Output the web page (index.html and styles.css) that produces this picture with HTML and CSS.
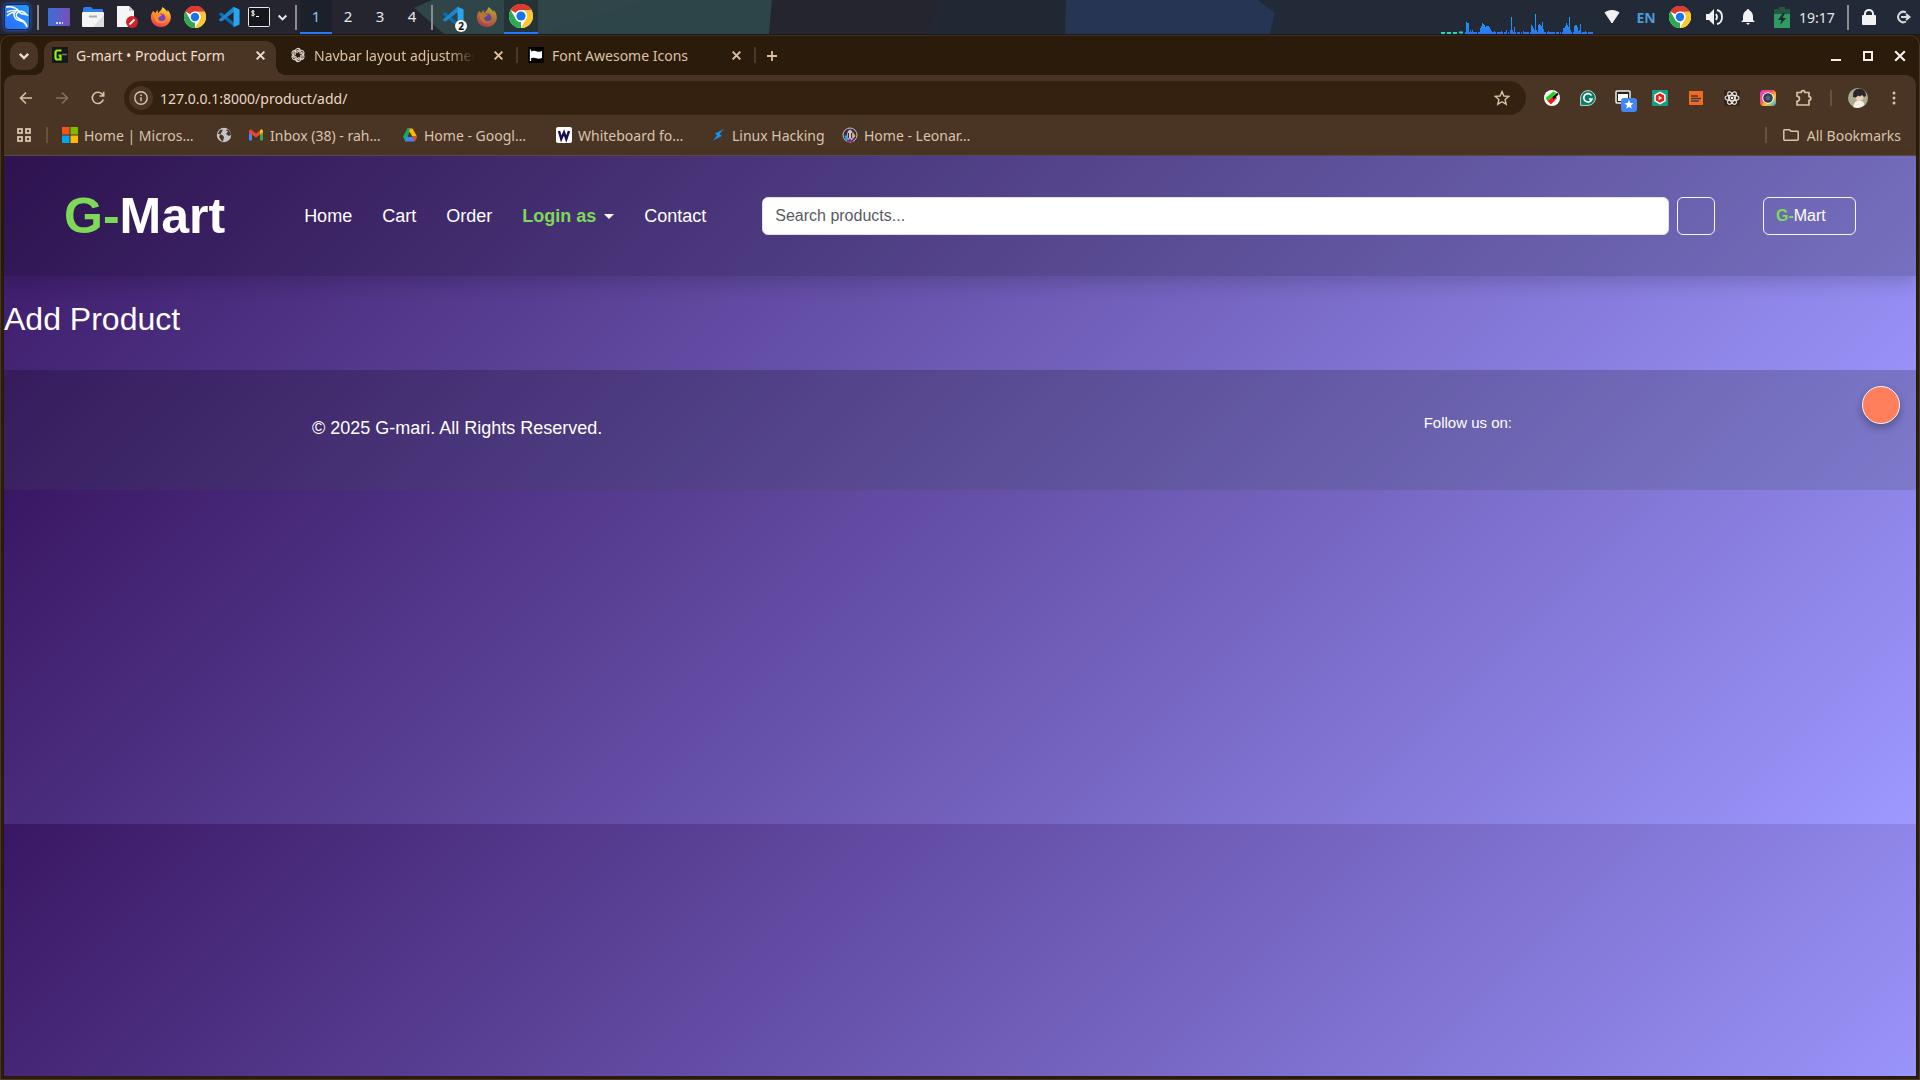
FILE: index.html
```html
<!DOCTYPE html>
<html lang="en">
<head>
<meta charset="utf-8">
<meta name="viewport" content="width=device-width, initial-scale=1">
<title>G-mart • Product Form</title>
<link rel="stylesheet" href="styles.css">
</head>
<body>
<svg class="defs" aria-hidden="true">
  <defs>
    <linearGradient id="g-kali" x1="0" y1="1" x2="1" y2="0"><stop offset="0" stop-color="#2a6cff"/><stop offset="1" stop-color="#1f9bff"/></linearGradient>
    <linearGradient id="g-desk" x1="0" y1="0" x2="1" y2="0"><stop offset="0" stop-color="#3a6fd8"/><stop offset="1" stop-color="#7a4fb5"/></linearGradient>
    <linearGradient id="g-fox" x1="0.7" y1="0" x2="0.3" y2="1"><stop offset="0" stop-color="#ffdf3d"/><stop offset="0.45" stop-color="#ff8a26"/><stop offset="1" stop-color="#f5335a"/></linearGradient>
    <linearGradient id="g-cam" x1="0" y1="0" x2="1" y2="1"><stop offset="0" stop-color="#e23bf0"/><stop offset="0.4" stop-color="#ff4f5e"/><stop offset="0.65" stop-color="#ffc428"/><stop offset="1" stop-color="#22a6ff"/></linearGradient>
    <linearGradient id="g-load" x1="0" y1="0" x2="0" y2="1"><stop offset="0" stop-color="#16b0f5"/><stop offset="1" stop-color="#2e74ee"/></linearGradient>
    <symbol id="chrome" viewBox="0 0 24 24">
      <circle cx="12" cy="12" r="12" fill="#fff"/>
      <path d="M1.6 6A12 12 0 0 1 22.4 6H12a6 6 0 0 0-5.2 3z" fill="#e33b2e"/>
      <path d="M1.6 6 6.8 15a6 6 0 0 0 5.2 3l0 6A12 12 0 0 1 1.6 6z" fill="#2da94f"/>
      <path d="M22.4 6A12 12 0 0 1 12 24l5.2-9A6 6 0 0 0 16.5 8 6 6 0 0 0 12 6z" fill="#fdc72e"/>
      <path d="M1.6 6A12 12 0 0 1 22.4 6H12z" fill="#dc3a2e"/>
      <circle cx="12" cy="12" r="6" fill="#fff"/><circle cx="12" cy="12" r="4.6" fill="#1a73e8"/>
    </symbol>
    <symbol id="firefox" viewBox="0 0 24 24">
      <path d="M3.5 5.5 6 7.5 8 4l1 3.5C11 5 13 4 13.5 1c3 1.500 4 4 5.500 5.500V4C23 8 24 13 21 18c-4 6.500-14 6.500-18 .5-3-4.500-2.500-9.500.5-13z" fill="url(#g-fox)"/>
      <circle cx="12" cy="13" r="4.800" fill="#7a43c9"/>
      <path d="M3 9c2-1.500 5-2 7-.5l3 1c-.5 1.800-2.500 2-3.500 2.500C8 14 10 17 13 16.500c2 0 3.500-1 4.500-3C18 19 10 21 6 16 4.500 14 4 11 3 9z" fill="#ff8f27"/>
    </symbol>
    <symbol id="vscode" viewBox="0 0 24 24">
      <path d="M2.300 7.300 4.300 7.300 18 18.500V23.300L.8 9z" fill="#0e6cae"/>
      <path d="M.8 15 17 .8 18 6 4.300 16.700 2.300 16.700z" fill="#1b86cf"/>
      <path d="M17 .8 23.500 3.800V20.200L17 23.200z" fill="#2ba4ef"/>
    </symbol>
    <symbol id="close" viewBox="0 0 10 10"><path d="M1.500 1.500 8.500 8.500M8.500 1.500 1.500 8.500" stroke="currentColor" stroke-width="1.800" fill="none"/></symbol>
    <symbol id="chevron" viewBox="0 0 10 10"><path d="M1.500 3.200 5 6.700 8.500 3.200" stroke="currentColor" stroke-width="1.900" fill="none"/></symbol>
  </defs>
</svg>

<header class="panel">
  <svg class="panel-art" viewBox="0 0 1920 35" preserveAspectRatio="none" aria-hidden="true">
    <rect width="1920" height="35" fill="#24252f"/>
    <path d="M414 8 432 0H772L769 35H444z" fill="#304547"/>
    <path d="M540 35H769L772 0H650z" fill="#2d4449"/>
    <path d="M772 0H938L927 35H769z" fill="#25252e"/>
    <path d="M938 0H1066L1065 35H927z" fill="#212834"/>
    <path d="M1066 0H1258L1275 13 1270 35H1065z" fill="#273554"/>
    <path d="M1258 0H1920V35H1270L1275 13z" fill="#222a37"/>
  </svg>
  <nav class="panel-group" aria-label="Applications">
    <button class="p-btn p-start" aria-label="Menu"><svg width="26" height="26" viewBox="0 0 26 26"><rect x="1" y="1" width="24" height="24" rx="3" fill="url(#g-kali)"/><path d="M2 3C8 2 12 4 15 7M3 8c4-2 8-2 12-1 4 0 6 1 8 4l-4-1c-2 0-3-1-4-2-3 1-4 4-1 6 4 2 8 3 9 9-2-5-5-6-9-7-5-2-5-7-2-9M3 12c3-3 6-4 9-4" stroke="#fff" stroke-width="1.400" fill="none"/></svg></button>
    <span class="p-sep"></span>
    <button class="p-btn" aria-label="Show desktop"><svg width="22" height="18" viewBox="0 0 22 18"><rect width="22" height="18" rx="1" fill="url(#g-desk)"/><path d="M8 15h2M11 15h2M14 15h1" stroke="#fff" stroke-width="1.500"/></svg></button>
    <button class="p-btn" aria-label="Files"><svg width="22" height="20" viewBox="0 0 22 20"><path d="M1 2q0-2 2-2h6l2 2h9q1 0 1 1v4H1z" fill="#2f7bf0"/><rect y="5" width="22" height="15" rx="1" fill="#f4f4f4"/><path d="M22 8v12H11z" fill="#dcdcdc"/><path d="M7 9.500h8" stroke="#aaa" stroke-width="2"/></svg></button>
    <button class="p-btn" aria-label="Text editor"><svg width="22" height="22" viewBox="0 0 22 22"><path d="M1 0h12l5 5v16H1z" fill="#f6f6f6"/><path d="M13 0 18 5H13z" fill="#ccc"/><circle cx="16" cy="16" r="6" fill="#d3222a"/><path d="M13.500 18.500 18.500 13.500" stroke="#fff" stroke-width="1.800"/></svg></button>
    <button class="p-btn" aria-label="Firefox"><svg width="22" height="22"><use href="#firefox"/></svg></button>
    <button class="p-btn" aria-label="Chrome"><svg width="22" height="22"><use href="#chrome"/></svg></button>
    <button class="p-btn" aria-label="Code"><svg width="22" height="22"><use href="#vscode"/></svg></button>
    <button class="p-btn p-narrow" aria-label="Terminal"><svg width="22" height="20" viewBox="0 0 22 20"><rect x=".5" y=".5" width="21" height="19" rx="1" fill="#16171b" stroke="#e8e8e8"/><path d="M6.500 4.500C5 3.500 3.500 4 3.500 5s3 1 3 2.300-2 1.500-3.200.6M5 3v6.500M8 9.500h3" stroke="#fff" fill="none"/></svg></button>
    <button class="p-btn p-chevron" aria-label="More terminals"><svg width="11" height="11"><use href="#chevron"/></svg></button>
    <span class="p-sep"></span>
    <button class="ws ws-on">1</button><button class="ws">2</button><button class="ws">3</button><button class="ws">4</button>
    <span class="p-sep"></span>
    <button class="p-btn" aria-label="Code, 2 windows"><svg width="22" height="22"><use href="#vscode"/></svg><span class="p-count">2</span></button>
    <button class="p-btn p-dim" aria-label="Firefox window"><svg width="22" height="22"><use href="#firefox"/></svg></button>
    <button class="p-btn p-on" aria-label="Chrome window"><svg width="24" height="24"><use href="#chrome"/></svg></button>
  </nav>
  <div class="panel-group">
    <svg class="load" width="152" height="34" viewBox="0 0 152 34" role="img" aria-label="CPU load"><path d="M0 33h4M6 33h4M12 33h4M18 32.500h4" stroke="#1fd8c4" stroke-width="2"/><path d="M24 33H152" stroke="#2e74ee" stroke-width="2" stroke-dasharray="3 1 1 1 6 1"/><path d="M25 34V22H26V23H28V32H29V30H30V34H31V30H32V34H39V28H40V26H41V23H42V24H43V25H44V27H45V26H48V27H49V29H50V31H51V34H53V31H54V34H60V31H61V34H65V30H66V34H69V30H70V17H71V30H72V32H73V27H74V32H75V34H82V31H83V34H90V25H91V26H92V28H93V30H94V14H95V30H96V32H97V25H98V24H99V25H100V26H101V22H102V29H103V34H107V31H108V34H122V28H124V26H125V23H126V25H127V27H128V17H129V30H130V34H133V26H134V25H136V27H137V31H138V30H139V24H140V33H141V34H144V31H145V34z" fill="url(#g-load)"/></svg>
    <button class="p-btn" aria-label="Wi-Fi"><svg width="16" height="14" viewBox="0 0 16 14"><path d="M1 2.500Q8-1.500 15 2.500L8 13z" fill="#f2f2f2" stroke="#f2f2f2" stroke-linejoin="round"/></svg></button>
    <button class="p-btn p-lang">EN</button>
    <button class="p-btn" aria-label="Chrome"><svg width="22" height="22"><use href="#chrome"/></svg></button>
    <button class="p-btn" aria-label="Volume"><svg width="18" height="18" viewBox="0 0 18 18"><path d="M1 6h3l5-5v16l-5-5H1z" fill="#f2f2f2"/><path d="M11 6q2 3 0 6M12 2q5 1 5 7t-5 7" stroke="#f2f2f2" stroke-width="1.800" fill="none"/></svg></button>
    <button class="p-btn" aria-label="Notifications"><svg width="16" height="16" viewBox="0 0 16 16"><path d="M8 0q1.500 0 1.500 1.500Q13 3 13 8v3l2 2H1l2-2V8q0-5 3.500-6.500Q6.500 0 8 0zM6 14h4l-2 2z" fill="#f2f2f2"/></svg></button>
    <button class="p-btn" aria-label="Battery"><svg width="16" height="21" viewBox="0 0 16 21"><path d="M5 0h6v2h4q1 0 1 1v17q0 1-1 1H1q-1 0-1-1V3q0-1 1-1h4z" fill="#23573f"/><path d="M0 7h16v13q0 1-1 1H1q-1 0-1-1z" fill="#2f9a62"/><path d="M9 6 4 13h3.500L6 18l6-7H8.500L11 6z" fill="#1b2a33"/></svg></button>
    <time class="p-clock">19:17</time>
    <span class="p-sep"></span>
    <button class="p-btn" aria-label="Lock"><svg width="14" height="16" viewBox="0 0 14 16"><rect y="6" width="14" height="10" rx="1" fill="#f2f2f2"/><path d="M3 7V4.500a4 3.500 0 0 1 8 0V7" stroke="#f2f2f2" stroke-width="2" fill="none"/></svg></button>
    <button class="p-btn" aria-label="Log out"><svg width="16" height="14" viewBox="0 0 16 14"><path d="M11 2.500A5.200 5.200 0 1 0 11 11.500M6 7h8M11 4l3.500 3L11 10" stroke="#d8dade" stroke-width="2" fill="none"/></svg></button>
  </div>
</header>

<div class="window">
  <div class="tabstrip">
    <button class="tab-menu" aria-label="Search tabs"><svg width="12" height="12"><use href="#chevron"/></svg></button>
    <div class="tabs">
      <div class="tab tab-active">
        <svg width="16" height="16" viewBox="0 0 16 16"><rect width="16" height="16" fill="#17181a"/><path d="M9.500 3.500H5.500Q3.500 3.500 3.500 6v4.500q0 2 2 2h3V8.500H6.500" stroke="#8ff01c" stroke-width="2.200" fill="none"/><path d="M10 7.500h5" stroke="#777" stroke-width="1.500"/></svg>
        <span class="tab-title">G-mart • Product Form</span>
        <button class="icon-btn tab-close" aria-label="Close tab"><svg width="11" height="11"><use href="#close"/></svg></button>
      </div>
      <div class="tab">
        <svg width="16" height="16" viewBox="0 0 16 16" fill="none" stroke="#e2d8cf" stroke-width="1.100"><g id="knot"><path d="M5.200 8.200V4.200a2.800 2.800 0 0 1 5.200-1.400M5.200 4.800 8.400 3a2.800 2.800 0 0 1 2 0"/></g><use href="#knot" transform="rotate(60 8 8)"/><use href="#knot" transform="rotate(120 8 8)"/><use href="#knot" transform="rotate(180 8 8)"/><use href="#knot" transform="rotate(240 8 8)"/><use href="#knot" transform="rotate(300 8 8)"/></svg>
        <span class="tab-title tab-fade">Navbar layout adjustmen</span>
        <button class="icon-btn tab-close" aria-label="Close tab"><svg width="11" height="11"><use href="#close"/></svg></button>
      </div>
      <div class="tab">
        <svg width="16" height="16" viewBox="0 0 16 16"><rect width="16" height="16" rx="1" fill="#000"/><path d="M2.500 2.500V14" stroke="#fff" stroke-width="1.300"/><path d="M3 4.500q3-1.500 5.500-.3T14 4v7q-3 1.200-5.500.2T3 11z" fill="#fff"/></svg>
        <span class="tab-title">Font Awesome Icons</span>
        <button class="icon-btn tab-close" aria-label="Close tab"><svg width="11" height="11"><use href="#close"/></svg></button>
      </div>
    </div>
    <button class="icon-btn tab-new" aria-label="New tab"><svg width="12" height="12" viewBox="0 0 12 12"><path d="M6 1v10M1 6h10" stroke="currentColor" stroke-width="1.800"/></svg></button>
    <div class="win-controls">
      <button class="icon-btn" aria-label="Minimize"><svg width="12" height="12" viewBox="0 0 12 12"><path d="M1 10h10" stroke="currentColor" stroke-width="2"/></svg></button>
      <button class="icon-btn" aria-label="Maximize"><svg width="12" height="12" viewBox="0 0 12 12"><rect x="2" y="2" width="8" height="8" fill="none" stroke="currentColor" stroke-width="2"/></svg></button>
      <button class="icon-btn" aria-label="Close"><svg width="12" height="12" viewBox="0 0 10 10"><path d="M1 1 9 9M9 1 1 9" stroke="currentColor" stroke-width="1.800"/></svg></button>
    </div>
  </div>

  <div class="toolbar">
    <button class="icon-btn" aria-label="Back"><svg width="14" height="14" viewBox="0 0 14 14"><path d="M13 7H2M7 1.500 1.500 7 7 12.500" stroke="currentColor" stroke-width="1.600" fill="none"/></svg></button>
    <button class="icon-btn is-off" aria-label="Forward"><svg width="14" height="14" viewBox="0 0 14 14"><path d="M1 7h11M7 1.500 12.500 7 7 12.500" stroke="currentColor" stroke-width="1.600" fill="none"/></svg></button>
    <button class="icon-btn" aria-label="Reload"><svg width="14" height="14" viewBox="0 0 14 14"><path d="M12.300 8.500A5.600 5.600 0 1 1 11 3L12.500 4.700M12.700.8V5H8.500" stroke="currentColor" stroke-width="1.600" fill="none"/></svg></button>
    <div class="omnibox">
      <button class="site-info" aria-label="View site information"><svg width="14" height="14" viewBox="0 0 14 14"><circle cx="7" cy="7" r="6.200" fill="none" stroke="currentColor" stroke-width="1.400"/><path d="M7 6.200v4M7 3.500v1.400" stroke="currentColor" stroke-width="1.500"/></svg></button>
      <input class="url" type="text" aria-label="Address" value="127.0.0.1:8000/product/add/">
      <button class="icon-btn" aria-label="Bookmark this tab"><svg width="16" height="16" viewBox="0 0 16 16"><path d="M8 1.600 9.900 6 14.700 6.400 11.100 9.600 12.200 14.200 8 11.700 3.800 14.200 4.900 9.600 1.300 6.400 6.100 6z" fill="none" stroke="currentColor" stroke-width="1.400"/></svg></button>
    </div>
    <div class="extensions">
      <button class="icon-btn" aria-label="Colour picker"><svg width="16" height="16" viewBox="0 0 16 16"><circle cx="8" cy="8" r="8" fill="#fff"/><path d="M1.500 8l8-6.500 3 1.500-9 8z" fill="#12d812"/><path d="M3.500 11l7-6 2.500 3-6 6.500z" fill="#f01c1c"/><path d="M8.500 7l5-4.500 1 2-5 5z" fill="#111"/></svg></button>
      <button class="icon-btn" aria-label="Grammarly"><svg width="16" height="16" viewBox="0 0 16 16"><path d="M.6 15.400V8A7.400 7.400 0 1 1 8 15.400z" fill="#117a65" stroke="#b9d5cd"/><path d="M11.500 5.500A4.200 4.200 0 1 0 12 9H9" fill="none" stroke="#fff" stroke-width="1.600"/></svg></button>
      <button class="icon-btn ext-badge" aria-label="Tab saver"><svg width="22" height="22" viewBox="0 0 22 22"><rect x="1" y="1" width="14" height="12" rx="1" fill="#222" stroke="#eee" stroke-width="1.500"/><rect x="3" y="4" width="10" height="7" fill="#fff"/><rect x="6" y="8" width="16" height="14" rx="3" fill="#4285f4"/><path d="M14 10 15.300 13 18.500 13.300 16 15.400 16.800 18.600 14 16.900 11.200 18.600 12 15.400 9.500 13.300 12.700 13z" fill="#fff"/></svg></button>
      <button class="icon-btn" aria-label="Video helper"><svg width="16" height="16" viewBox="0 0 16 16"><rect width="16" height="16" rx="1" fill="#12a17f"/><path d="M8 1.500 13.700 4.800V11.200L8 14.500 2.300 11.200V4.800z" fill="#fff"/><path d="M8 3.300 12.200 5.600V10.400L8 12.700 3.800 10.400V5.600z" fill="#f01919"/><path d="M6.700 5.800 10.300 8 6.700 10.200z" fill="#fff"/></svg></button>
      <button class="icon-btn" aria-label="Notes"><svg width="14" height="14" viewBox="0 0 14 14"><rect width="14" height="14" fill="#f26b1d"/><path d="M2 5h7M2 7.500h10M2 10h8" stroke="#3b3b4a" stroke-width="1.300"/></svg></button>
      <button class="icon-btn" aria-label="React tools"><svg width="16" height="16" viewBox="0 0 16 16"><rect width="16" height="16" fill="#35271b"/><g fill="none" stroke="#f0ebe6" stroke-width="1.100"><ellipse cx="8" cy="8" rx="7" ry="2.700"/><ellipse cx="8" cy="8" rx="7" ry="2.700" transform="rotate(60 8 8)"/><ellipse cx="8" cy="8" rx="7" ry="2.700" transform="rotate(120 8 8)"/></g><circle cx="8" cy="8" r="1.300" fill="#fff"/></svg></button>
      <button class="icon-btn" aria-label="Screen capture"><svg width="16" height="16" viewBox="0 0 16 16"><rect width="16" height="16" rx="4" fill="url(#g-cam)"/><circle cx="8" cy="8" r="5.800" fill="#fff"/><circle cx="8" cy="8" r="4.800" fill="#2d3b4d"/><circle cx="8" cy="8" r="2.500" fill="#4d6074"/></svg></button>
      <button class="icon-btn" aria-label="Extensions"><svg width="18" height="18" viewBox="0 0 18 18"><path d="M2 3.500H6.200a1.800 1.800 0 0 1 3.600 0H14V7.700a1.800 1.800 0 0 1 0 3.600V16H2V12.300q2.500-.3 2.500-2.500T2 7.200z" fill="none" stroke="currentColor" stroke-width="1.700" stroke-linejoin="round"/></svg></button>
    </div>
    <span class="bar-sep"></span>
    <button class="icon-btn" aria-label="Profile"><svg width="20" height="20" viewBox="0 0 20 20"><circle cx="10" cy="10" r="10" fill="#a9ac8d"/><path d="M5 19q1-6 6-7 5 1 5.500 5Q13 20 10 20 7 20 5 19z" fill="#f3efe8"/><ellipse cx="11.500" cy="9" rx="4" ry="3.500" fill="#efcdb6"/><path d="M5 9Q4 1 11.500 .500 18 1 18 8l-2 1-2-2-2 1.500-2-1-2 2z" fill="#29252a"/></svg></button>
    <button class="icon-btn" aria-label="Menu"><svg width="4" height="14" viewBox="0 0 4 14" fill="currentColor"><circle cx="2" cy="2" r="1.500"/><circle cx="2" cy="7" r="1.500"/><circle cx="2" cy="12" r="1.500"/></svg></button>
  </div>

  <nav class="bookmarks" aria-label="Bookmarks">
    <button class="icon-btn" aria-label="Apps"><svg width="14" height="14" viewBox="0 0 14 14" fill="none" stroke="currentColor" stroke-width="1.800"><rect x="1" y="1" width="4" height="4"/><rect x="9" y="1" width="4" height="4"/><rect x="1" y="9" width="4" height="4"/><rect x="9" y="9" width="4" height="4"/></svg></button>
    <span class="bar-sep"></span>
    <ul class="marks">
      <li class="mark"><a href="#"><svg width="16" height="16" viewBox="0 0 16 16"><path d="M0 0h7.500v7.500H0z" fill="#f4511e"/><path d="M8.500 0H16v7.500H8.500z" fill="#7fba00"/><path d="M0 8.500h7.500V16H0z" fill="#00a4ef"/><path d="M8.500 8.500H16V16H8.500z" fill="#ffb900"/></svg>Home | Micros…</a></li>
      <li class="mark mark-icon"><a href="#" aria-label="Untitled"><svg width="16" height="16" viewBox="0 0 16 16"><circle cx="8" cy="8" r="7.200" fill="#c3c7cc"/><path d="M7 2.500 4 3 1.800 7l4.700 1 1.500 2-1 4.500L5 13 3 10zM9.500 3 12 4.500 10 7 13 9l2-1-.5-2.500L12 2.500z" fill="#4a3524"/></svg></a></li>
      <li class="mark"><a href="#"><svg width="16" height="16" viewBox="0 0 16 16"><path d="M1 4v9.500h3V7z" fill="#4285f4"/><path d="M12 7v6.500h3V4z" fill="#34a853"/><path d="M1 4q0-2 2-1.500L8 6.500 13 2.500Q15 2 15 4L15 5.500 8 10.500 1 5.500z" fill="#ea4335"/><path d="M12 3.300 13 2.500Q15 2 15 4V5.500L12 7.700z" fill="#fbbc04"/></svg>Inbox (38) - rah…</a></li>
      <li class="mark"><a href="#"><svg width="16" height="16" viewBox="0 0 16 16"><path d="M5.500 1.500H8L5 13 3.500 14.500 1 10z" fill="#1ea362"/><path d="M5.500 1.500H10.500L15 9.500H10z" fill="#ffba00"/><path d="M5.500 1.500H8L5.500 10 1 10z" fill="#11a861"/><path d="M4.500 9.800H15.200L12.500 14.500H3z" fill="#4285f4"/><path d="M15.200 9.800 12.500 14.500 10 9.800z" fill="#ea4335"/><path d="M8 5.800 10.300 9.800H5.700z" fill="#4b3524"/></svg>Home - Googl…</a></li>
      <li class="mark"><a href="#"><svg width="16" height="16" viewBox="0 0 16 16"><rect width="16" height="16" rx="2" fill="#fff"/><path d="M3 4 5.200 12 8 5.500 10.300 12 13 4" fill="none" stroke="#160f4a" stroke-width="2.400"/></svg>Whiteboard fo…</a></li>
      <li class="mark mark-short"><a href="#"><svg width="16" height="16" viewBox="0 0 16 16"><path d="M14 2 5 6.500 7 8.500 3 13.500 12 9 9.500 7z" fill="#1692f5"/></svg>Linux Hacking</a></li>
      <li class="mark"><a href="#"><svg width="16" height="16" viewBox="0 0 16 16"><circle cx="8" cy="8" r="7" fill="#3b2b4f" stroke="#c9c3d0"/><path d="M5.500 13Q4 4 8 2.500q4 1.500 2.500 10.500z" fill="#d9c5b4"/><path d="M2.500 9 4 13 7 13 5 8z" fill="#2ea8d8"/><path d="M11 12 13.500 9 11 5z" fill="#e0b13b"/><path d="M5 15 8 11 11 15z" fill="#8c2a9c"/><path d="M6.500 6v5M9.500 6v5" stroke="#3b2b4f"/></svg>Home - Leonar…</a></li>
    </ul>
    <span class="bar-sep"></span>
    <button class="all-marks"><svg width="16" height="16" viewBox="0 0 16 16"><path d="M.8 3.500V12.500Q.8 13.200 1.500 13.200H14.500Q15.200 13.200 15.200 12.500V5Q15.200 4.300 14.500 4.300H8L6.500 2.800H1.500Q.8 2.800.8 3.500z" fill="none" stroke="currentColor" stroke-width="1.500"/></svg>All Bookmarks</button>
  </nav>

  <div class="page">
    <div class="site">
      <header class="site-header">
        <a class="brand" href="#"><span class="accent">G-</span>Mart</a>
        <nav class="site-nav" aria-label="Main">
          <a href="#">Home</a>
          <a href="#">Cart</a>
          <a href="#">Order</a>
          <a class="dropdown" href="#"><span class="accent">Login as</span></a>
          <a href="#">Contact</a>
        </nav>
        <form class="search" role="search">
          <input type="search" placeholder="Search products..." aria-label="Search products">
          <button type="button" class="outline" aria-label="Search"></button>
        </form>
        <button class="outline account"><span class="accent">G-</span>Mart</button>
      </header>
      <main><h2>Add Product</h2></main>
      <footer class="site-footer">
        <p class="copyright">© 2025 G-mari. All Rights Reserved.</p>
        <p class="follow">Follow us on:</p>
        <button class="fab" aria-label="Back to top"></button>
      </footer>
    </div>
  </div>
</div>
</body>
</html>
```

FILE: styles.css
```css
* { box-sizing: border-box; }

html { height: 100%; }

body {
  margin: 0;
  min-height: 100%;
  display: flex;
  flex-direction: column;
  background: #2b1c0b;
  font-family: "Noto Sans", sans-serif;
  font-size: 14px;
}

button {
  margin: 0;
  padding: 0;
  border: 0;
  background: none;
  color: inherit;
  font: inherit;
}

svg { display: block; flex: none; }
a { color: inherit; text-decoration: none; }
.defs { position: absolute; width: 0; height: 0; }

/* Desktop panel */
.panel {
  position: relative;
  height: 35px;
  display: flex;
  justify-content: space-between;
  overflow: hidden;
  color: #e6e8ec;
  border-bottom: 1px solid #15191f;
}

.panel-art { position: absolute; inset: 0; width: 100%; height: 100%; }

.panel-group {
  position: relative;
  display: flex;
  align-items: center;
}

.p-btn {
  position: relative;
  width: 34px;
  height: 34px;
  display: flex;
  align-items: center;
  justify-content: center;
}

.p-start svg { border-radius: 4px; box-shadow: 0 0 4px #2a6cff; }
.p-narrow { width: 26px; }
.p-chevron { width: 20px; }
.p-sep { width: 2px; height: 25px; margin: 0 3px; background: #8b8c90; }

.ws { width: 32px; height: 34px; border-bottom: 2px solid transparent; font-size: 15px; }
.ws-on { background: #1b202b; border-color: #2777ff; color: #8fc4ee; }

.p-dim { opacity: 0.65; }
.p-on { background: #233336; border-bottom: 2px solid #2777ff; }

.p-count {
  position: absolute;
  right: 3px;
  bottom: 2px;
  width: 12px;
  height: 12px;
  border-radius: 50%;
  background: #f5f5f5;
  color: #111;
  font-size: 10px;
  font-weight: 700;
  line-height: 12px;
  text-align: center;
}

.load { margin-right: 2px; }
.p-lang { color: #4c9bd8; font-weight: 700; }
.p-clock { width: 45px; }

/* Browser window */
.window {
  flex: 1;
  display: flex;
  flex-direction: column;
  padding: 0 3px 3px;
  border: 1px solid #4a3728;
  border-top-color: #40301f;
  border-radius: 10px 10px 0 0;
  background: #2b1b0a;
  color: #dcc1a5;
}

.icon-btn {
  width: 36px;
  height: 34px;
  display: flex;
  align-items: center;
  justify-content: center;
  flex: none;
}

.tabstrip {
  height: 39px;
  display: flex;
  align-items: center;
  padding: 0 0 0 6px;
}

.tab-menu {
  width: 28px;
  height: 28px;
  display: flex;
  align-items: center;
  justify-content: center;
  border-radius: 10px;
  background: #4a3524;
  color: #eedfd0;
}

.tabs { display: flex; gap: 6px; padding-left: 6px; align-self: stretch; }

.tab {
  position: relative;
  width: 232px;
  display: flex;
  align-items: center;
  gap: 8px;
  padding: 0 0 1px 8px;
}

.tab + .tab::after {
  content: "";
  position: absolute;
  right: -4px;
  width: 2px;
  height: 16px;
  background: #4d3828;
}

.tab-active {
  margin-top: 5px;
  padding-bottom: 6px;
  border-radius: 10px 10px 0 0;
  background: #4a3524;
  color: #eedfd0;
}

.tab-active::before {
  content: "";
  position: absolute;
  bottom: 0;
  left: -10px;
  right: -10px;
  height: 10px;
  background:
    radial-gradient(circle at 0 0, transparent 10px, #4a3524 10px) left / 10px 10px no-repeat,
    radial-gradient(circle at 100% 0, transparent 10px, #4a3524 10px) right / 10px 10px no-repeat;
}

.tab-title { flex: 1; min-width: 0; white-space: nowrap; }
.tab-fade { mask-image: linear-gradient(to right, #000 80%, transparent 96%); }
.tab-close { width: 32px; margin-left: -8px; }
.tab-new { width: 28px; margin-left: 6px; }
.win-controls { display: flex; margin-left: auto; color: #f4efe9; }
.win-controls .icon-btn { width: 32px; }

.toolbar {
  height: 46px;
  display: flex;
  align-items: center;
  padding: 0 4px;
  border-radius: 10px 10px 0 0;
  background: #4a3524;
}

.is-off { color: #857059; }

.omnibox {
  flex: 1;
  height: 34px;
  display: flex;
  align-items: center;
  margin: 0 8px;
  padding: 0 6px 0 5px;
  border-radius: 17px;
  background: #34210f;
}

.site-info {
  width: 24px;
  height: 24px;
  display: flex;
  align-items: center;
  justify-content: center;
  border-radius: 50%;
  background: #4a3524;
}

.url {
  flex: 1;
  min-width: 0;
  padding: 0 0 0 7px;
  border: 0;
  outline: 0;
  background: none;
  color: #e8d8c8;
  font: inherit;
}

.extensions { display: flex; }
.ext-badge svg { margin: 6px 0 0 4px; }
.bar-sep { width: 2px; height: 16px; flex: none; background: #69513a; }
.toolbar .bar-sep { margin: 0 8px; }

.bookmarks {
  height: 35px;
  display: flex;
  align-items: center;
  padding: 0 15px 6px 2px;
  border-bottom: 1px solid #5b4a4a;
  background: #4a3524;
  color: #d9c3ac;
}

.bookmarks > .bar-sep { margin: 0 4px; }

.marks {
  flex: 1;
  display: flex;
  margin: 0;
  padding: 0 0 0 10px;
  list-style: none;
}

.mark { width: 154px; }
.mark-icon { width: 32px; }
.mark-short { width: 132px; }

.mark a {
  height: 20px;
  display: flex;
  align-items: center;
  gap: 6px;
  white-space: nowrap;
}

.all-marks { display: flex; align-items: center; gap: 8px; margin-left: 12px; }

/* Site */
.page {
  flex: 1;
  color: #fff;
  font-family: "Liberation Sans", Arial, sans-serif;
  font-size: 16px;
  background: linear-gradient(135deg, #3a1764, #9d99ff) 0 0 / 100% 334px;
}

.site-header {
  min-height: 120px;
  display: flex;
  align-items: center;
  padding: 0 60px;
  background: rgba(0, 0, 0, 0.2);
  box-shadow: 0 8px 16px rgba(0, 0, 0, 0.15);
}

.brand { font-size: 50px; font-weight: 700; line-height: 60px; }
.accent { color: #7ed957; font-weight: 700; }
.site-nav { display: flex; gap: 30px; margin-left: 79px; font-size: 18px; }

.dropdown { display: flex; align-items: center; gap: 8px; }
.dropdown::after {
  content: "";
  border: 5px solid transparent;
  border-top-color: #fff;
  border-bottom: 0;
}

.search { flex: 1; display: flex; gap: 8px; margin: 0 48px 0 56px; }

.search input {
  flex: 1;
  min-width: 0;
  height: 38px;
  padding: 0 12px;
  border: 1px solid #dee2e6;
  border-radius: 6px;
  background: #fff;
  font: inherit;
}

.search input::placeholder { color: #595c5f; opacity: 1; }

.outline {
  width: 38px;
  height: 38px;
  border: 1px solid #f8f9fa;
  border-radius: 6px;
}

.account { width: 93px; padding: 0 12px; text-align: left; }

main { padding: 24px 0 32px; }
h2 { margin: 0; font-size: 32px; font-weight: 400; line-height: 38px; }

.site-footer {
  position: relative;
  min-height: 120px;
  display: flex;
  justify-content: space-between;
  padding: 40px 404px 0 308px;
  background: rgba(0, 0, 0, 0.2);
}

.site-footer p { margin: 0; }
.copyright { font-size: 18px; line-height: 36px; }
.follow { font-size: 15px; line-height: 26px; }

.fab {
  position: absolute;
  top: 16px;
  right: 16px;
  width: 38px;
  height: 38px;
  border: 1px solid #f8f9fa;
  border-radius: 50%;
  background: #ff7f5c;
  box-shadow: 0 4px 8px rgba(0, 0, 0, 0.3);
}
```
